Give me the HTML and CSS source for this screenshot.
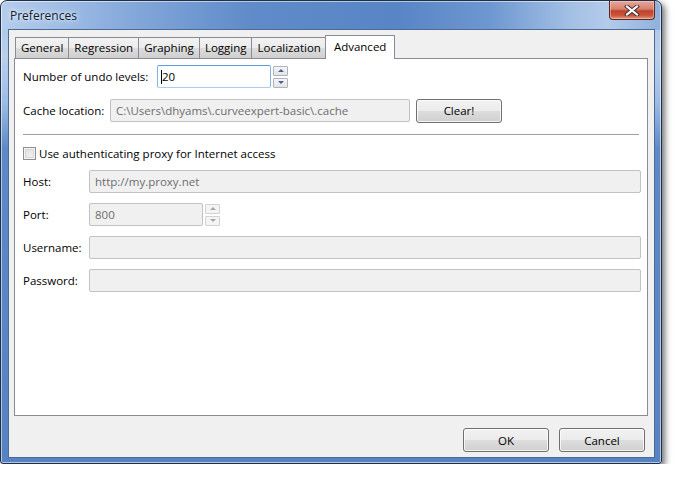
FILE: index.html
```html
<!DOCTYPE html>
<html>
<head>
<meta charset="utf-8">
<title>Preferences</title>
<link rel="stylesheet" href="styles.css">
</head>
<body>
<div class="window">
  <div class="titlebar">
    <span class="title">Preferences</span>
    <div class="close">
      <svg width="16" height="11" viewBox="0 0 16 11">
        <path d="M3 1.5 L13 9.5 M13 1.5 L3 9.5" stroke="#3a2a2a" stroke-width="4" stroke-linecap="square"/>
        <path d="M3 1.5 L13 9.5 M13 1.5 L3 9.5" stroke="#ffffff" stroke-width="2.2" stroke-linecap="square"/>
      </svg>
    </div>
  </div>
  <div class="client">
    <div class="tabs">
      <div class="tab">General</div>
      <div class="tab">Regression</div>
      <div class="tab">Graphing</div>
      <div class="tab">Logging</div>
      <div class="tab">Localization</div>
      <div class="tab active">Advanced</div>
    </div>
    <div class="pane">
      <div class="row row-undo">
        <span class="label">Number of undo levels:</span>
        <div class="field focus undo"><span class="caret"></span>20</div>
        <div class="spin">
          <div class="spin-btn"><span class="tri up"></span></div>
          <div class="spin-btn"><span class="tri down"></span></div>
        </div>
      </div>
      <div class="row row-cache">
        <span class="label">Cache location:</span>
        <div class="field disabled cache">C:\Users\dhyams\.curveexpert-basic\.cache</div>
        <div class="btn clear">Clear!</div>
      </div>
      <div class="sep"></div>
      <div class="check">
        <span class="box"></span>
        <span>Use authenticating proxy for Internet access</span>
      </div>
      <div class="proxy">
        <span class="plabel">Host:</span>
        <div class="field disabled wide">http://my.proxy.net</div>
        <span class="plabel">Port:</span>
        <div class="port-wrap">
          <div class="field disabled port">800</div>
          <div class="spin dis">
            <div class="spin-btn"><span class="tri up"></span></div>
            <div class="spin-btn"><span class="tri down"></span></div>
          </div>
        </div>
        <span class="plabel">Username:</span>
        <div class="field disabled wide"></div>
        <span class="plabel">Password:</span>
        <div class="field disabled wide"></div>
      </div>
    </div>
    <div class="buttons">
      <div class="btn">OK</div>
      <div class="btn">Cancel</div>
    </div>
  </div>
</div>
</body>
</html>
```
FILE: styles.css
```css
html, body {
  margin: 0;
  padding: 0;
  background: #ffffff;
}
body {
  font-family: "Open Sans", "Noto Sans", "Liberation Sans", sans-serif;
  font-size: 11.5px;
  color: #000;
}
.window {
  box-sizing: border-box;
  width: 662px;
  height: 464px;
  border: 1px solid #1f2f44;
  border-radius: 7px 7px 3px 3px;
  background:
    linear-gradient(90deg, #b6cdec 0%, #a2bfe6 8%, #7fa4d8 22%, #5f8bc9 38%, #5885c6 60%, #6d97d0 74%, #a2bfe4 86%, #b4cbea 92%, #8eb0dd 100%) top / 100% 29px no-repeat,
    linear-gradient(180deg, #a9c3e6 0%, #b9cfec 12%, #9dbce4 22%, #5d89c8 32%, #5782c4 100%);
  box-shadow: 3px 3px 6px rgba(0,0,0,0.55), inset 0 0 0 1px rgba(255,255,255,0.55);
  padding: 0 6px 5px 7px;
  display: flex;
  flex-direction: column;
}
.titlebar {
  height: 28px;
  display: flex;
  justify-content: space-between;
  align-items: flex-start;
}
.title {
  font-size: 12px;
  margin: 6px 0 0 2px;
  color: #10202f;
  text-shadow: 0 0 6px rgba(255,255,255,0.9), 0 0 3px rgba(255,255,255,0.7);
}
.close {
  box-sizing: border-box;
  width: 46px;
  height: 19px;
  border: 1px solid #5a2a22;
  border-top: none;
  border-radius: 0 0 4px 4px;
  background: linear-gradient(180deg, #e8a89b 0%, #d6806e 45%, #c2402a 55%, #c9563c 80%, #e29a80 100%);
  box-shadow: inset 0 0 0 1px rgba(255,220,210,0.45);
  display: flex;
  align-items: center;
  justify-content: center;
}
.client {
  flex: 1;
  box-sizing: border-box;
  border: 1px solid #4d6a92;
  background: #f0f0f0;
  padding: 4px 6px 4px 5px;
  display: flex;
  flex-direction: column;
}
.tabs {
  display: flex;
  align-items: flex-end;
  height: 24px;
  padding-left: 1px;
  position: relative;
  z-index: 2;
}
.tab {
  box-sizing: border-box;
  height: 21px;
  padding: 0 5px;
  border: 1px solid #898c95;
  border-bottom: none;
  margin-right: -1px;
  background: linear-gradient(180deg, #f2f2f2 0%, #ebebeb 50%, #dddddd 51%, #cfcfcf 100%);
  display: flex;
  align-items: center;
  line-height: 1;
}
.tab.active {
  height: 24px;
  margin-left: -1px;
  margin-bottom: -1px;
  padding: 0 8px 2px 8px;
  background: #ffffff;
}
.pane {
  box-sizing: border-box;
  height: 358px;
  border: 1px solid #898c95;
  background: #ffffff;
  padding: 6px 6px 0 8px;
}
.row {
  display: flex;
  align-items: center;
  height: 23px;
}
.row-cache {
  margin-top: 11px;
}
.label {
  white-space: nowrap;
}
.row-undo .label { width: 134px; }
.row-cache .label { width: 87px; }
.field {
  box-sizing: border-box;
  height: 23px;
  border: 1px solid #abadb3;
  border-radius: 2px;
  background: #fff;
  padding: 0 5px;
  display: flex;
  align-items: center;
  white-space: nowrap;
  overflow: hidden;
}
.field.focus {
  border-color: #5d9be0 #7eb4ea #a9cdf3 #7eb4ea;
  padding-left: 3px;
}
.caret {
  display: inline-block;
  width: 1px;
  height: 14px;
  background: #000;
}
.field.disabled {
  background: #f0f0f0;
  border-color: #c2c2c2;
  color: #6d6d6d;
}
.undo { width: 114px; }
.cache { width: 300px; }
.spin {
  display: flex;
  flex-direction: column;
  gap: 2px;
  margin-left: 2px;
  height: 22px;
  justify-content: center;
}
.spin-btn {
  box-sizing: border-box;
  width: 15px;
  height: 10px;
  border: 1px solid #adb2bb;
  border-radius: 1px;
  background: linear-gradient(180deg, #f6f6f6 0%, #e4e4e4 100%);
  display: flex;
  align-items: center;
  justify-content: center;
}
.tri {
  width: 0;
  height: 0;
  border-left: 3px solid transparent;
  border-right: 3px solid transparent;
}
.tri.up { border-bottom: 3px solid #44609a; }
.tri.down { border-top: 3px solid #44609a; }
.spin.dis .spin-btn { border-color: #d2d2d2; background: #f4f4f4; }
.spin.dis .tri.up { border-bottom-color: #a6a6a6; }
.spin.dis .tri.down { border-top-color: #a6a6a6; }
.btn {
  box-sizing: border-box;
  width: 86px;
  height: 24px;
  border: 1px solid #707070;
  border-radius: 3px;
  background: linear-gradient(180deg, #f2f2f2 0%, #ebebeb 48%, #dddddd 52%, #cfcfcf 100%);
  box-shadow: inset 0 0 0 1px rgba(255,255,255,0.75);
  display: flex;
  align-items: center;
  justify-content: center;
}
.clear { margin-left: 6px; }
.sep {
  height: 1px;
  background: #a0a0a0;
  border-bottom: 1px solid #fff;
  margin: 12px 2px 0 0;
}
.check {
  display: flex;
  align-items: center;
  margin-top: 10px;
  height: 14px;
}
.box {
  box-sizing: border-box;
  width: 13px;
  height: 13px;
  border: 1px solid #8f8f8f;
  background: linear-gradient(135deg, #dcdcdc 0%, #f6f6f6 100%);
  box-shadow: inset 0 0 0 1px #f4f4f4, inset 0 0 0 2px #d8d8d8;
  margin-right: 3px;
}
.proxy {
  display: grid;
  grid-template-columns: 66px 1fr;
  row-gap: 10px;
  align-items: center;
  margin-top: 10px;
}
.plabel { white-space: nowrap; }
.wide { width: 100%; }
.port-wrap { display: flex; align-items: center; }
.port { width: 114px; }
.buttons {
  display: flex;
  justify-content: flex-end;
  gap: 10px;
  margin-top: 12px;
  padding-right: 3px;
}
```
